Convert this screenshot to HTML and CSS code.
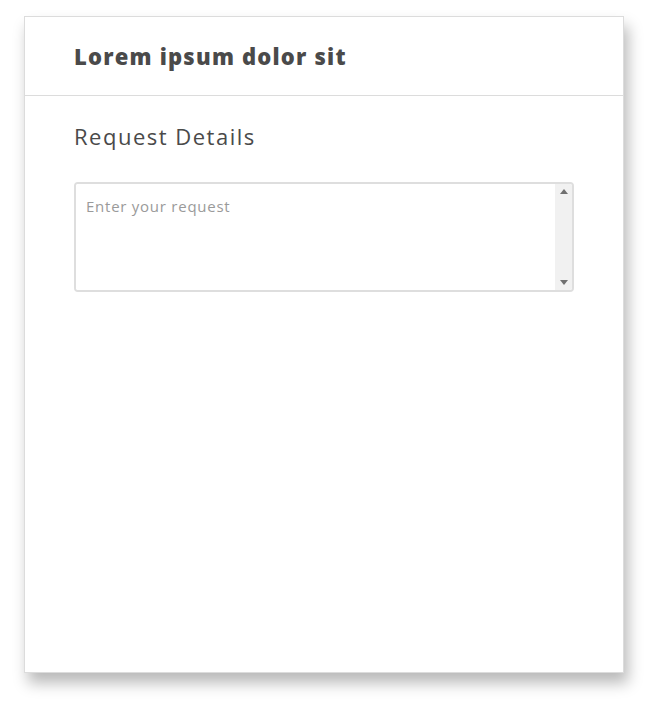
FILE: index.html
```html
<!DOCTYPE html>
<html>
<head>
<meta charset="utf-8">
<link rel="stylesheet" href="styles.css">
</head>
<body>
<div class="card">
  <div class="card-header">
    <h1 class="title">Lorem ipsum dolor sit</h1>
  </div>
  <div class="card-body">
    <h2 class="section-title">Request Details</h2>
    <div class="field">
      <textarea class="request" placeholder="Enter your request"></textarea>
      <div class="scrollbar">
        <span class="arrow up"></span>
        <span class="arrow down"></span>
      </div>
    </div>
  </div>
</div>
</body>
</html>
```
FILE: styles.css
```css
html, body {
  margin: 0;
  padding: 0;
  background: #ffffff;
}
body {
  padding: 16px 28px 34px 24px;
  font-family: "Open Sans", "DejaVu Sans", sans-serif;
  color: #4a4a4a;
}
.card {
  width: 600px;
  height: 657px;
  border: 1px solid #dcdcdc;
  background: #fff;
  box-shadow: 4px 10px 14px rgba(0, 0, 0, 0.28);
  box-sizing: border-box;
  display: flex;
  flex-direction: column;
}
.card-header {
  height: 79px;
  box-sizing: border-box;
  border-bottom: 1px solid #dcdcdc;
  padding: 0 49px;
  display: flex;
  align-items: center;
}
.title {
  margin: 0;
  font-size: 22px;
  font-weight: 800;
  color: #4a4a4a;
  letter-spacing: 1.2px;
}
.card-body {
  padding: 24px 49px 0 49px;
  display: flex;
  flex-direction: column;
}
.section-title {
  margin: 0;
  font-size: 22px;
  font-weight: 400;
  color: #4a4a4a;
  line-height: 32px;
  letter-spacing: 1.5px;
}
.field {
  margin-top: 30px;
  width: 500px;
  height: 110px;
  box-sizing: border-box;
  border: 2px solid #dedede;
  border-radius: 4px;
  display: flex;
  overflow: hidden;
}
.request {
  flex: 1;
  border: none;
  margin: 0;
  padding: 12px 10px;
  font-family: "Open Sans", sans-serif;
  font-size: 15px;
  letter-spacing: 0.75px;
  color: #444;
  resize: none;
  outline: none;
  overflow: hidden;
}
.request::placeholder {
  color: #9a9a9a;
}
.scrollbar {
  width: 17px;
  background: #f1f1f1;
  display: flex;
  flex-direction: column;
  justify-content: space-between;
  align-items: center;
  padding: 5px 0 5px;
}
.arrow {
  width: 0;
  height: 0;
  border-left: 4px solid transparent;
  border-right: 4px solid transparent;
}
.arrow.up {
  border-bottom: 5px solid #707070;
}
.arrow.down {
  border-top: 5px solid #707070;
}
```
